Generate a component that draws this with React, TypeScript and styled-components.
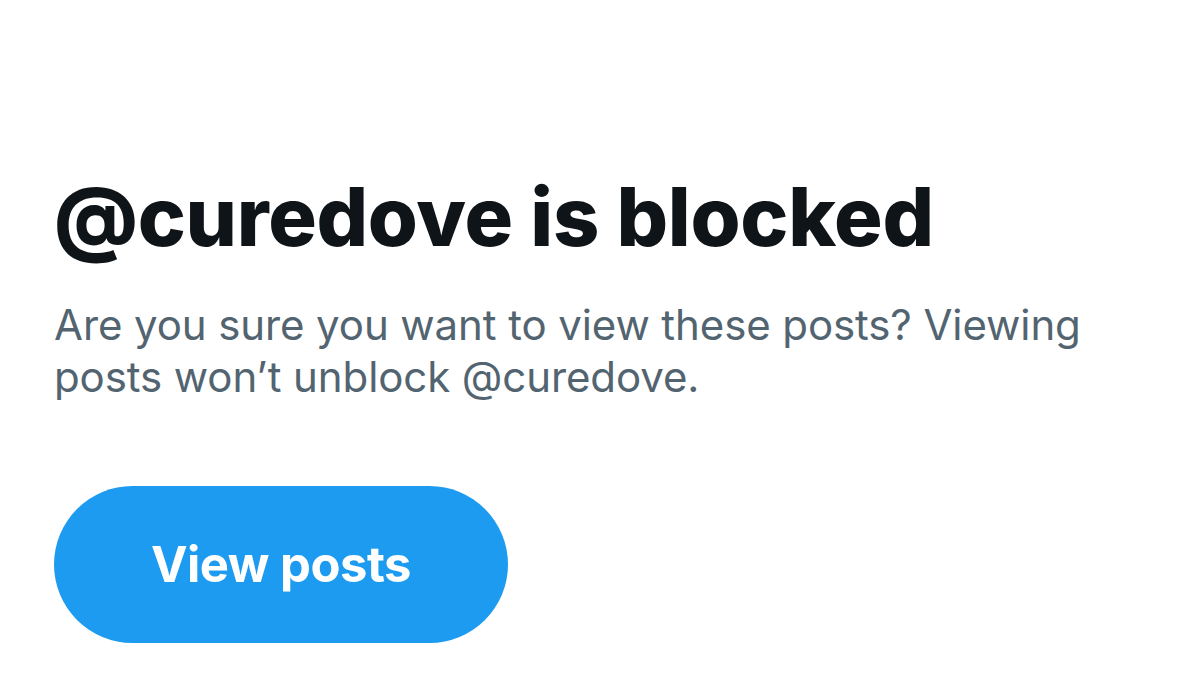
import React from "react";
import styled, { createGlobalStyle } from "styled-components";

const Global = createGlobalStyle`
  html, body { margin: 0; padding: 0; background: #ffffff; }
  body { font-family: Inter, "Noto Sans", sans-serif; }
`;

const Page = styled.main`
  width: 1200px;
  height: 677px;
  box-sizing: border-box;
  padding: 169px 0 0 54px;
  display: flex;
  flex-direction: column;
  align-items: flex-start;
  background: #ffffff;
`;

const Title = styled.h1`
  margin: 0;
  font-family: Inter, "Noto Sans", sans-serif;
  font-weight: 800;
  font-size: 81px;
  line-height: 96px;
  letter-spacing: -0.3px;
  color: #0f1419;
`;

const Subtitle = styled.p`
  margin: 34px 0 0 0;
  width: 1080px;
  font-family: Inter, "Noto Sans", sans-serif;
  font-weight: 400;
  font-size: 42px;
  line-height: 52px;
  letter-spacing: -0.1px;
  color: #536471;
`;

const ViewButton = styled.button`
  margin-top: 83px;
  width: 454px;
  height: 157px;
  border: none;
  border-radius: 79px;
  background: #1d9bf0;
  color: #ffffff;
  font-family: Inter, "Noto Sans", sans-serif;
  font-weight: 700;
  font-size: 49px;
  letter-spacing: -0.5px;
  display: flex;
  align-items: center;
  justify-content: center;
  cursor: pointer;
`;

export default function App() {
  return (
    <>
      <Global />
      <Page>
        <Title>@curedove is blocked</Title>
        <Subtitle>
          Are you sure you want to view these posts? Viewing posts won’t unblock @curedove.
        </Subtitle>
        <ViewButton>View posts</ViewButton>
      </Page>
    </>
  );
}
